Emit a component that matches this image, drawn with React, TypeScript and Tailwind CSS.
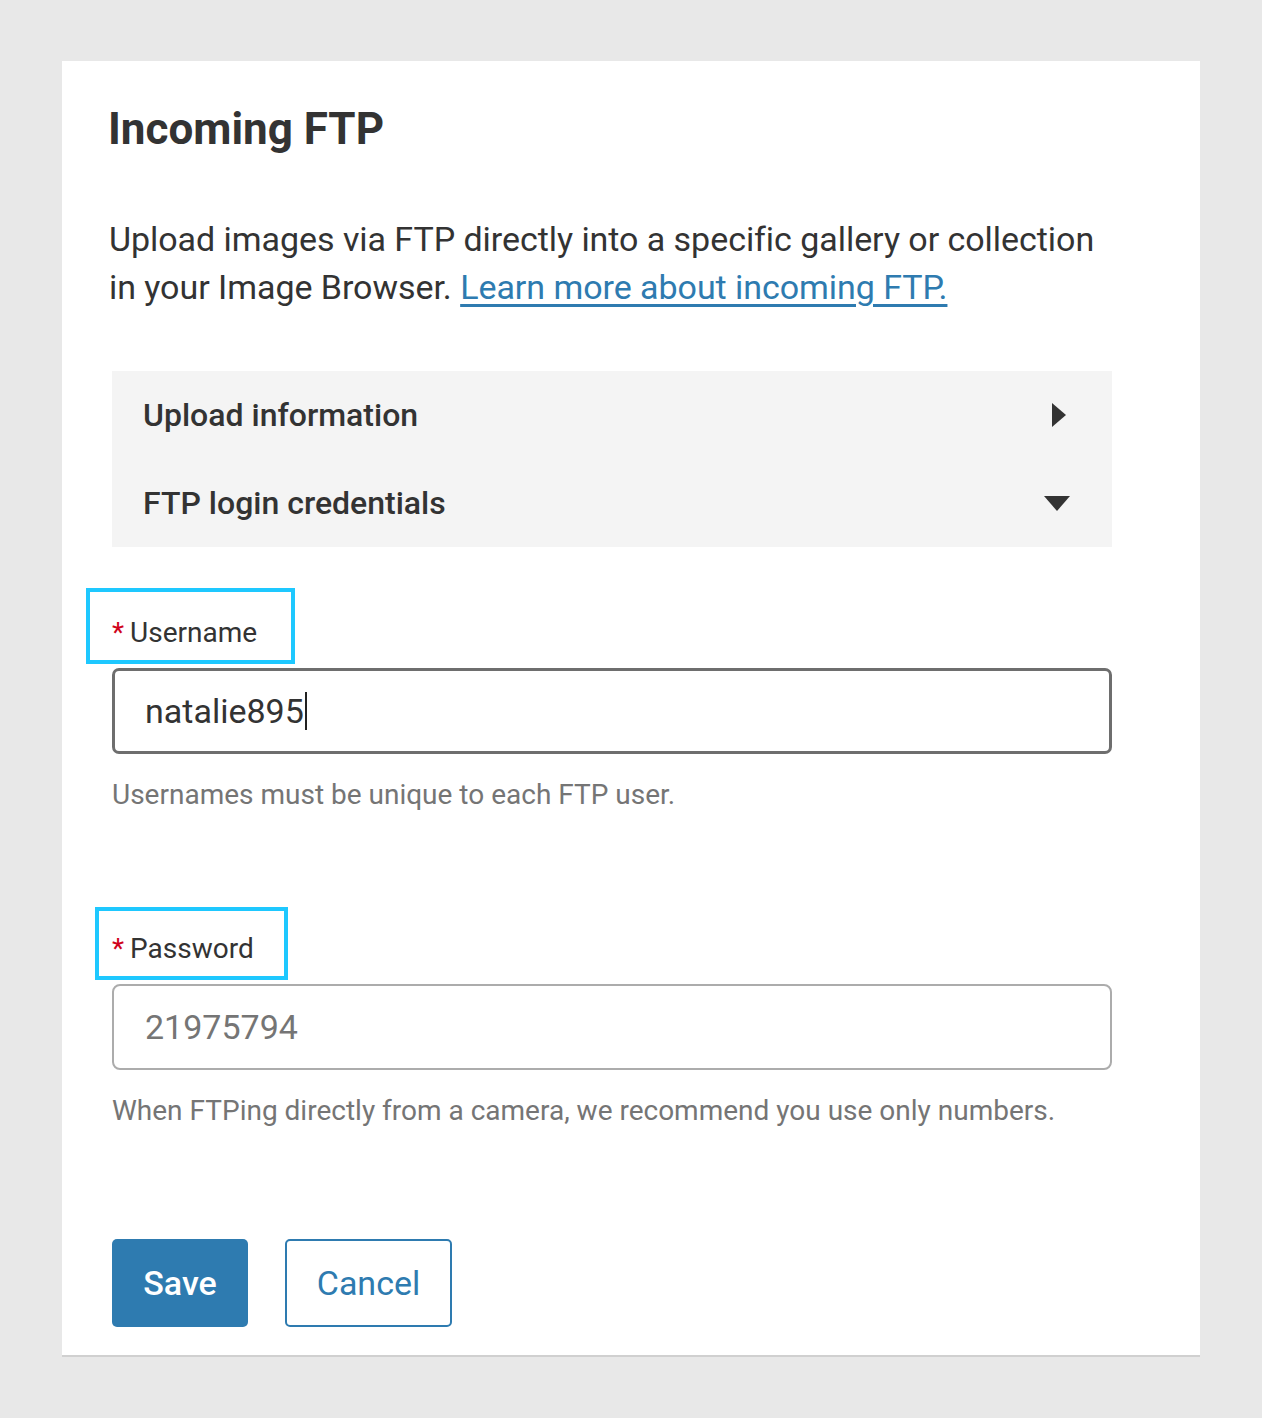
const FONT = { fontFamily: 'Roboto, "Liberation Sans", sans-serif' };

function Triangle({ dir }: { dir: 'right' | 'down' }) {
  if (dir === 'right') {
    return (
      <svg width="16" height="24" viewBox="0 0 16 24" className="mr-[3px] block">
        <path d="M1 0 L15 12 L1 24 Z" fill="#333333" />
      </svg>
    );
  }
  return (
    <svg width="26" height="16" viewBox="0 0 26 16" className="block">
      <path d="M0 1 L26 1 L13 16 Z" fill="#333333" />
    </svg>
  );
}

function AccordionRow({ title, dir }: { title: string; dir: 'right' | 'down' }) {
  return (
    <div className="flex h-[88px] items-center justify-between pl-[31px] pr-[42px]">
      <span className="text-[32px] font-medium text-[#333333]">{title}</span>
      <Triangle dir={dir} />
    </div>
  );
}

function Label({ text, className }: { text: string; className: string }) {
  return (
    <div className={`inline-block border-4 border-[#1ec8ff] ${className}`}>
      <span className="text-[28px] leading-[36px] text-[#333333]">
        <span className="mr-[6px] text-[#d0021b]">*</span>
        {text}
      </span>
    </div>
  );
}

export default function App() {
  return (
    <div className="min-h-[1418px] bg-[#e8e8e8] pt-[61px] pl-[62px]" style={FONT}>
      <div className="w-[1138px] border-b-2 border-[#d0d0d0] bg-white pt-[40px] pb-[28px] pl-[47px]">
        <h1 className="ml-[-1px] text-[44px] font-bold leading-[56px] text-[#333333]">Incoming FTP</h1>
        <p className="mt-[58px] w-[1010px] text-[34px] leading-[48px] tracking-[-0.05px] text-[#333333]">
          Upload images via FTP directly into a specific gallery or collection in your Image Browser.{' '}
          <a href="#" className="text-[#2e7bb0] underline underline-offset-[5px]">
            Learn more about incoming FTP.
          </a>
        </p>

        <div className="ml-[3px] w-[1000px]">
          <div className="mt-[60px] bg-[#f4f4f4]">
            <AccordionRow title="Upload information" dir="right" />
            <AccordionRow title="FTP login credentials" dir="down" />
          </div>

          <div className="mt-[41px]">
            <Label text="Username" className="ml-[-26px] pt-[23px] pb-[9px] pl-[22px] pr-[34px]" />
          </div>
          <div className="mt-[4px] flex h-[86px] items-center rounded-[7px] border-[3px] border-[#6e6e6e] pl-[30px]">
            <span className="text-[34px] text-[#333333]">natalie895</span>
            <span className="ml-[1px] h-[38px] w-[2px] bg-[#222222]" />
          </div>
          <p className="mt-[23px] text-[28px] leading-[36px] text-[#757575]">
            Usernames must be unique to each FTP user.
          </p>

          <div className="mt-[94px]">
            <Label text="Password" className="ml-[-17px] pt-[20px] pb-[9px] pl-[13px] pr-[30px]" />
          </div>
          <div className="mt-[4px] flex h-[86px] items-center rounded-[8px] border-2 border-[#acacac] pl-[31px]">
            <span className="text-[34px] text-[#757575]">21975794</span>
          </div>
          <p className="mt-[23px] text-[28px] leading-[36px] text-[#757575]">
            When FTPing directly from a camera, we recommend you use only numbers.
          </p>

          <div className="mt-[110px] flex gap-[37px]">
            <button className="h-[88px] w-[136px] rounded-[5px] bg-[#2e7bb0] text-[34px] font-medium text-white">
              Save
            </button>
            <button className="h-[88px] w-[167px] rounded-[5px] border-2 border-[#2e7bb0] bg-white text-[34px] text-[#2e7bb0]">
              Cancel
            </button>
          </div>
        </div>
      </div>
    </div>
  );
}
